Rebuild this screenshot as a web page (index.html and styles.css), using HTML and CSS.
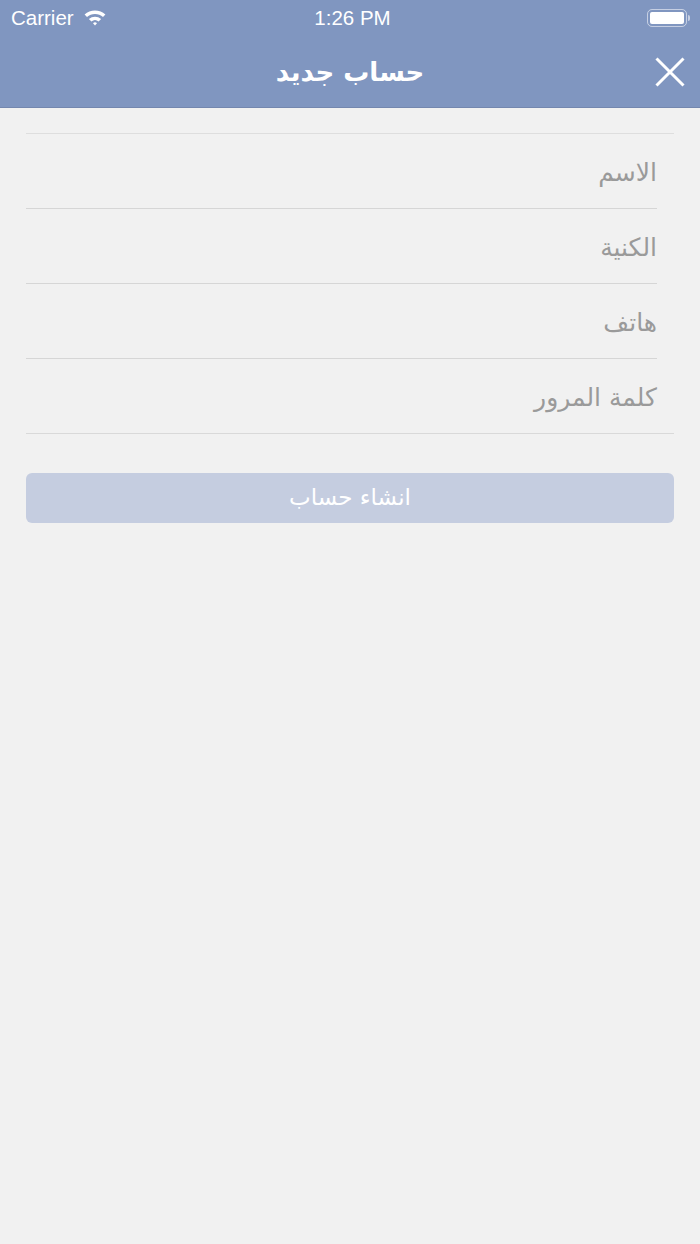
FILE: index.html
```html
<!DOCTYPE html>
<html lang="ar">
<head>
    <meta charset="UTF-8">
    <meta name="viewport" content="width=device-width, initial-scale=1.0">
    <title>حساب جديد</title>
    <link rel="stylesheet" href="styles.css">
</head>
<body>
    <header class="topbar">
        <div class="status-bar">
            <div class="carrier">
                Carrier
                <svg class="wifi" width="22" height="17" viewBox="0 0 22 17">
                    <path d="M0.6 5.6 A15 15 0 0 1 21.4 5.6 L19 8.1 A11.6 11.6 0 0 0 3 8.1 Z" fill="#fff"/>
                    <path d="M4.9 10.1 A9 9 0 0 1 17.1 10.1 L14.6 12.6 A5.5 5.5 0 0 0 7.4 12.6 Z" fill="#fff"/>
                    <path d="M9 14.3 A2.9 2.9 0 0 1 13 14.3 L11 16.4 Z" fill="#fff"/>
                </svg>
            </div>
            <div class="clock">1:26 PM</div>
            <div class="battery">
                <span class="battery-body"><span class="battery-level"></span></span>
                <span class="battery-tip"></span>
            </div>
        </div>
        <div class="nav-bar">
            <h1 class="nav-title">حساب جديد</h1>
            <button class="close-btn" aria-label="close">
                <svg width="30" height="30" viewBox="0 0 30 30">
                    <path d="M1.5 1.5 L28.5 28.5 M28.5 1.5 L1.5 28.5" stroke="#fff" stroke-width="3"/>
                </svg>
            </button>
        </div>
    </header>

    <main class="form" dir="rtl">
        <div class="fields">
            <div class="field"><span class="placeholder">الاسم</span></div>
            <div class="field"><span class="placeholder">الكنية</span></div>
            <div class="field"><span class="placeholder">هاتف</span></div>
            <div class="field"><span class="placeholder">كلمة المرور</span></div>
        </div>

        <button class="submit-btn" disabled>انشاء حساب</button>
    </main>
</body>
</html>
```

FILE: styles.css
```css
body {
    margin: 0;
    padding: 0;
    font-family: 'DejaVu Sans', 'Noto Sans', sans-serif;
    background-color: #f1f1f1;
    min-height: 100vh;
}

.topbar {
    background-color: #8096c0;
    color: white;
    border-bottom: 1px solid #7487ae;
}

.status-bar {
    height: 36px;
    padding: 0 10px 0 11px;
    display: flex;
    align-items: center;
    justify-content: space-between;
    font-family: 'Liberation Sans', Arial, sans-serif;
    font-size: 20.5px;
}

.carrier {
    flex: 1;
    display: flex;
    align-items: center;
    gap: 10px;
}

.wifi {
    margin-top: -2px;
}

.clock {
    flex: 1;
    text-align: center;
    padding-left: 4px;
}

.battery {
    flex: 1;
    display: flex;
    justify-content: flex-end;
    align-items: center;
}

.battery-body {
    width: 40px;
    height: 18px;
    border: 1.5px solid rgba(255, 255, 255, 0.55);
    border-radius: 5px;
    padding: 2px;
    box-sizing: border-box;
    display: flex;
}

.battery-level {
    flex: 1;
    background: white;
    border-radius: 2px;
}

.battery-tip {
    width: 2px;
    height: 6px;
    margin-left: 1px;
    background: rgba(255, 255, 255, 0.55);
    border-radius: 0 2px 2px 0;
}

.nav-bar {
    height: 71px;
    position: relative;
    display: flex;
    align-items: center;
    justify-content: center;
}

.nav-title {
    margin: 0;
    font-size: 26px;
    font-weight: bold;
}

.close-btn {
    position: absolute;
    right: 15px;
    top: 21px;
    width: 30px;
    height: 30px;
    padding: 0;
    border: none;
    background: none;
    cursor: pointer;
}

.form {
    padding: 25px 26px 0;
}

.fields {
    border-top: 1px solid #dedede;
    border-bottom: 1px solid #d9d9d9;
}

.field {
    height: 74px;
    margin-right: 17px;
    border-bottom: 1px solid #d6d6d6;
    display: flex;
    align-items: center;
}

.field:last-child {
    border-bottom: none;
}

.placeholder {
    color: #9a9a9a;
    font-size: 25px;
    padding-top: 2px;
}

.submit-btn {
    display: block;
    width: 100%;
    height: 50px;
    margin-top: 39px;
    border: none;
    border-radius: 6px;
    background-color: #c5cde0;
    color: white;
    font-family: 'DejaVu Sans', sans-serif;
    font-size: 23px;
    padding-bottom: 4px;
}
```
